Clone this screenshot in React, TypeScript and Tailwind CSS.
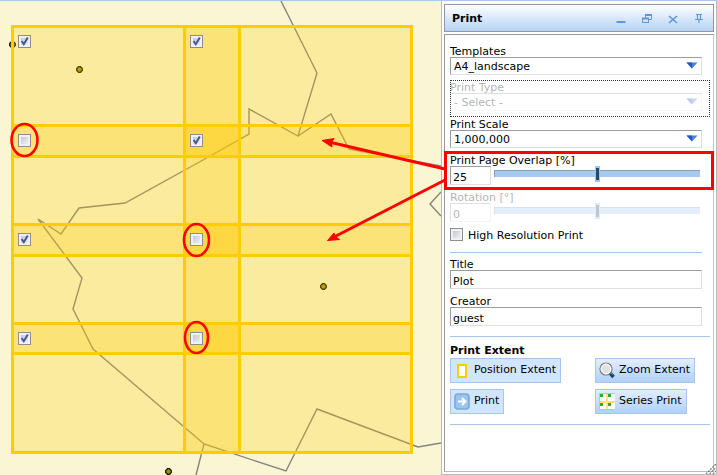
import type { ReactNode } from "react";

type Tile = { x: number; y: number; w: number; h: number };

const columns = [
  { x: 12.5, w: 227 },
  { x: 184.5, w: 227 },
];
const rows = [
  { y: 26.5, h: 130 },
  { y: 125.5, h: 130 },
  { y: 224.5, h: 129 },
  { y: 323.5, h: 129 },
];
const tiles: Tile[] = rows.flatMap((r) => columns.map((c) => ({ ...c, ...r })));

const tileBoxes = [
  { id: "a1", on: true, place: "left-[18px] top-[35px]" },
  { id: "b1", on: true, place: "left-[190px] top-[35px]" },
  { id: "a2", on: false, place: "left-[18px] top-[134px]" },
  { id: "b2", on: true, place: "left-[190px] top-[134px]" },
  { id: "a3", on: true, place: "left-[18px] top-[233px]" },
  { id: "b3", on: false, place: "left-[190px] top-[233px]" },
  { id: "a4", on: true, place: "left-[18px] top-[332px]" },
  { id: "b4", on: false, place: "left-[190px] top-[332px]" },
];

const places = [
  [12.5, 44.5],
  [79.5, 69.5],
  [323.5, 286.5],
  [168.5, 471.5],
];

const boxClass =
  "block size-[13px] appearance-none border border-[#8b8f94] bg-linear-to-br from-[#b9bdc9] to-[#fbfbfc] shadow-[inset_0_0_0_2px_#f1f1f1]";

function CheckBox({ id, on, label }: { id: string; on: boolean; label?: string }) {
  return (
    <span className="relative block size-[13px]">
      <input id={id} type="checkbox" defaultChecked={on} aria-label={label} className={`peer ${boxClass}`} />
      <svg viewBox="0 0 13 13" className="pointer-events-none absolute inset-0 hidden size-[13px] peer-checked:block">
        <path d="M3.6 6 L5.8 9.2 L9.8 2.4" fill="none" stroke="#40589c" strokeWidth="2" />
      </svg>
    </span>
  );
}

function MapView() {
  return (
    <main className="relative min-w-0 flex-1 bg-[#faf6d4]">
      <div className="absolute inset-0 overflow-hidden">
        <svg width="441" height="474" viewBox="0 1 441 474" className="block max-w-none">
          <g fill="none" stroke="#85837c" strokeWidth="1.4">
            <path d="M281 1 L317 73 L298 136 L249 109 V134 L203 160 L125 203 L79 208 L61 234 L38 219 L82 278 L73 309 L93 349 L204 444 L286 471 L317 409 L418 447 L441 443" />
            <path d="M298 136 L331 114 L349 149 L441 166" />
            <path d="M204 444 L196 475" />
            <path d="M441 192 L430 204 L441 216" />
          </g>
          {places.map(([x, y]) => (
            <path
              key={x}
              transform={`translate(${x} ${y})`}
              d="M-1 -2.8 H1 L2.8 -1 V1 L1 2.8 H-1 L-2.8 1 V-1 Z"
              fill="#a88c00"
              stroke="#1d1900"
              strokeWidth="1.3"
            />
          ))}
          {tiles.map((t) => (
            <rect key={`f${t.x}-${t.y}`} x={t.x} y={t.y} width={t.w} height={t.h} fill="#ffcc00" fillOpacity=".25" />
          ))}
          {tiles.map((t) => (
            <rect key={`s${t.x}-${t.y}`} x={t.x} y={t.y} width={t.w} height={t.h} fill="none" stroke="#ffcc00" strokeWidth="3" />
          ))}
        </svg>
      </div>
      <div className="absolute inset-x-0 -top-px">
        {tileBoxes.map((b) => (
          <div key={b.id} className={`absolute ${b.place}`}>
            <CheckBox id={b.id} on={b.on} label={`Page ${b.id}`} />
          </div>
        ))}
      </div>
      <svg width="450" height="474" viewBox="0 1 450 474" className="pointer-events-none absolute top-0 left-0 z-10 max-w-none">
        <g fill="none" stroke="#ff0000" strokeWidth="2.6">
          <ellipse cx="24.5" cy="140" rx="13" ry="16" />
          <ellipse cx="196.5" cy="240" rx="12.5" ry="16" />
          <ellipse cx="196.5" cy="337.5" rx="11.5" ry="15.5" />
          <path d="M445 169 L330 142.3 M445 180 L335 236.5" strokeWidth="3" />
        </g>
        <path
          d="M322 140.5 L334 138.5 L331.5 142.5 L332 147 Z M327.5 240.5 L334 233 L335 236.5 L339.5 239.5 Z"
          fill="#ff0000"
          stroke="#ff0000"
          strokeLinejoin="round"
        />
      </svg>
    </main>
  );
}

function Arrow() {
  return (
    <svg width="12" height="7" viewBox="0 0 12 7" className="pointer-events-none absolute top-[5px] right-[4px]">
      <path d="M0.5 0.5 H11.5 L6 6.5 Z" fill="#4a80e4" />
      <path d="M0.5 0.5 H6 V6.5 Z" fill="#2455b8" />
    </svg>
  );
}

const inset = "border border-t-[#999ca1] border-l-[#999ca1] border-r-[#dfdfdf] border-b-[#dfdfdf] bg-white";

function Label({ id, children }: { id: string; children: ReactNode }) {
  return (
    <label htmlFor={id} className="block h-[13px] leading-[15px]">
      {children}
    </label>
  );
}

function SelectField({ id, label, value, disabled }: { id: string; label: string; value: string; disabled?: boolean }) {
  return (
    <div className={disabled ? "opacity-30" : ""}>
      <Label id={id}>{label}</Label>
      <div className="relative mr-2">
        <select id={id} disabled={disabled} className={`block h-[18px] w-full appearance-none pt-px pl-[3px] leading-4 opacity-100 ${inset}`}>
          <option>{value}</option>
        </select>
        <Arrow />
      </div>
    </div>
  );
}

function TextField({ id, label, value }: { id: string; label: string; value: string }) {
  return (
    <div className="mr-2">
      <Label id={id}>{label}</Label>
      <input id={id} type="text" defaultValue={value} className={`block h-[19px] w-full px-[2px] pt-1 ${inset}`} />
    </div>
  );
}

type SliderProps = { id: string; label: string; value: number; min: number; max: number; disabled?: boolean };

function SliderField({ id, label, value, min, max, disabled }: SliderProps) {
  return (
    <div className={disabled ? "opacity-30" : ""}>
      <Label id={id}>{label}</Label>
      <div className="mr-2 flex items-start gap-[3px]">
        <input id={id} type="text" disabled={disabled} defaultValue={value} className={`block h-[19px] w-[41px] px-[2px] pt-1 ${inset}`} />
        <input
          type="range"
          aria-label={label}
          min={min}
          max={max}
          defaultValue={value}
          disabled={disabled}
          className="mr-[2px] block h-[15px] min-w-0 flex-1 appearance-none bg-transparent [&::-webkit-slider-runnable-track]:h-[7px] [&::-webkit-slider-runnable-track]:border-t [&::-webkit-slider-runnable-track]:border-l [&::-webkit-slider-runnable-track]:border-[#8f9bb0] [&::-webkit-slider-runnable-track]:bg-[#a5caf0] [&::-webkit-slider-thumb]:-mt-[5px] [&::-webkit-slider-thumb]:h-4 [&::-webkit-slider-thumb]:w-[5px] [&::-webkit-slider-thumb]:appearance-none [&::-webkit-slider-thumb]:border [&::-webkit-slider-thumb]:border-y-2 [&::-webkit-slider-thumb]:border-[#9cc6ee] [&::-webkit-slider-thumb]:bg-[#2b4a68]"
        />
      </div>
    </div>
  );
}

function PositionIcon() {
  return (
    <svg width="16" height="17" viewBox="0 0 16 17">
      <rect x="4" y="3" width="8" height="12" fill="#fff" stroke="#ffcc00" strokeWidth="2" />
    </svg>
  );
}

function ZoomIcon() {
  return (
    <svg width="16" height="17" viewBox="0 0 16 17">
      <path d="M10.5 10.5 L14.5 15" stroke="#17406f" strokeWidth="3.4" />
      <path d="M11 10 L13.5 12.5" stroke="#5aa0d8" strokeWidth="1" />
      <circle cx="7" cy="7" r="6" fill="#dfe1e4" stroke="#777" strokeWidth="1.2" />
      <circle cx="7" cy="7" r="4.9" fill="none" stroke="#fff" strokeWidth="1" />
    </svg>
  );
}

function PrintIcon() {
  return (
    <svg width="16" height="17" viewBox="0 0 16 17">
      <rect x="1" y="1" width="14" height="15" rx="3" fill="#9cc5ee" stroke="#78a9da" strokeWidth="1.6" />
      <path d="M4 8.5 H11 M8 5 L11.5 8.5 L8 12" fill="none" stroke="#fff" strokeWidth="2" />
    </svg>
  );
}

function SeriesIcon() {
  return (
    <svg width="16" height="17" viewBox="0 0 16 17" shapeRendering="crispEdges">
      <rect width="16" height="17" fill="#fff" />
      <path d="M0 8 H16 V10 H0 Z M7 0 H9 V17 H7 Z" fill="#ffe27a" />
      <path d="M0 0 H16 V1 H1 V16 H16 V17 H0 Z" fill="#ffcc00" />
      <path d="M1 1 H4 V4 H1 Z M9 1 H12 V4 H9 Z M1 10 H4 V13 H1 Z M9 10 H12 V13 H9 Z" fill="#22b422" />
    </svg>
  );
}

function ToolButton({ icon, children, flat }: { icon: ReactNode; children: ReactNode; flat?: boolean }) {
  return (
    <button
      type="button"
      className={`flex h-[25px] items-center gap-1 justify-self-start border border-[#a5c7f0] pr-1 pl-[3px] whitespace-nowrap ${
        flat ? "bg-[#d2e5fe]" : "bg-linear-to-b from-[#e3eefe] to-[#b0d0fc]"
      }`}
    >
      {icon}
      {children}
    </button>
  );
}

function WindowButton({ label, children }: { label: string; children: ReactNode }) {
  return (
    <button type="button" aria-label={label} className="block">
      <svg width="10" height="10" viewBox="0 0 10 10" fill="none" stroke="#5f98d3">
        {children}
      </svg>
    </button>
  );
}

function PrintPanel() {
  return (
    <aside className="relative flex w-[276px] shrink-0 flex-col border-x border-b border-[#bcbcbc] bg-white px-[2px] pt-[3px] pb-[2px]">
      <header className="flex h-7 shrink-0 items-center justify-between border border-[#9496a8] bg-linear-to-b from-[#fdfeff] to-[#b6d3f3] pr-[9px] pl-[7px]">
        <h1 className="pt-[2px] text-[11px] font-bold">Print</h1>
        <div className="flex gap-4 pt-[2px]">
          <WindowButton label="Minimize">
            <path d="M0.5 8 H9.5" strokeWidth="2" />
          </WindowButton>
          <WindowButton label="Restore">
            <path d="M3.5 4 V1.5 H9.5 V5.5 H7" />
            <path d="M3 1 H10" strokeWidth="2" />
            <rect x=".5" y="4.5" width="6" height="4" />
            <path d="M0 4.5 H7" strokeWidth="2" />
          </WindowButton>
          <WindowButton label="Close">
            <path d="M1 2 L9 9 M9 2 L1 9" strokeWidth="1.6" />
          </WindowButton>
          <WindowButton label="Pin">
            <path d="M2 .5 H8 M3.5 .5 V5 M6.5 .5 V5 M1 5.5 H9 M5 5.5 V9" strokeWidth="1.2" />
          </WindowButton>
        </div>
      </header>
      <form className="mt-[2px] flex-1 border border-t-[#999] border-r-[#c6c6c6] border-b-[#bbb] border-l-[#999] pt-[9px] pr-[3px] pl-[5px]">
        <SelectField id="template" label="Templates" value="A4_landscape" />
        <div className="mt-[5px] pb-[6px] outline-1 -outline-offset-1 outline-[#333] outline-dotted">
          <SelectField id="type" label="Print Type" value="- Select -" disabled />
        </div>
        <SelectField id="scale" label="Print Scale" value="1,000,000" />
        <div className="relative mt-[5px]">
          <SliderField id="overlap" label="Print Page Overlap [%]" value={25} min={0} max={50} />
          <div className="pointer-events-none absolute -top-[2px] -right-1 -bottom-[5px] -left-[6px] z-20 border-3 border-[#ff0000]" />
        </div>
        <div className="mt-[5px]">
          <SliderField id="rotation" label="Rotation [°]" value={0} min={-180} max={180} disabled />
        </div>
        <div className="mt-[6px] flex items-center gap-[5px]">
          <CheckBox id="hires" on={false} />
          <label htmlFor="hires" className="h-[13px] leading-[15px]">
            High Resolution Print
          </label>
        </div>
        <hr className="mt-[11px] mr-2 border-[#a5c7ec]" />
        <div className="mt-1 flex flex-col gap-[5px]">
          <TextField id="title" label="Title" value="Plot" />
          <TextField id="creator" label="Creator" value="guest" />
        </div>
        <hr className="mt-[10px] border-[#a5c7ec]" />
        <h2 className="mt-[6px] h-[13px] text-[11px] leading-[15px] font-bold">Print Extent</h2>
        <div className="mt-[2px] grid grid-cols-[145px_1fr] gap-y-[6px]">
          <ToolButton icon={<PositionIcon />} flat>Position Extent</ToolButton>
          <ToolButton icon={<ZoomIcon />}>Zoom Extent</ToolButton>
          <ToolButton icon={<PrintIcon />} flat>Print</ToolButton>
          <ToolButton icon={<SeriesIcon />}>Series Print</ToolButton>
        </div>
        <hr className="mt-[10px] border-[#a5c7ec]" />
      </form>
      <svg width="10" height="10" viewBox="0 0 10 10" className="absolute right-0 bottom-0">
        <path d="M0 10 L10 0 M3.5 10 L10 3.5 M7 10 L10 7" stroke="#777" strokeWidth="1.3" strokeDasharray="2 1" />
      </svg>
    </aside>
  );
}

export default function App() {
  return (
    <div className="relative flex min-h-screen border-t border-[#a6c8f0] bg-white font-['DejaVu_Sans',Verdana,sans-serif] text-[11px] text-black">
      <MapView />
      <PrintPanel />
    </div>
  );
}
